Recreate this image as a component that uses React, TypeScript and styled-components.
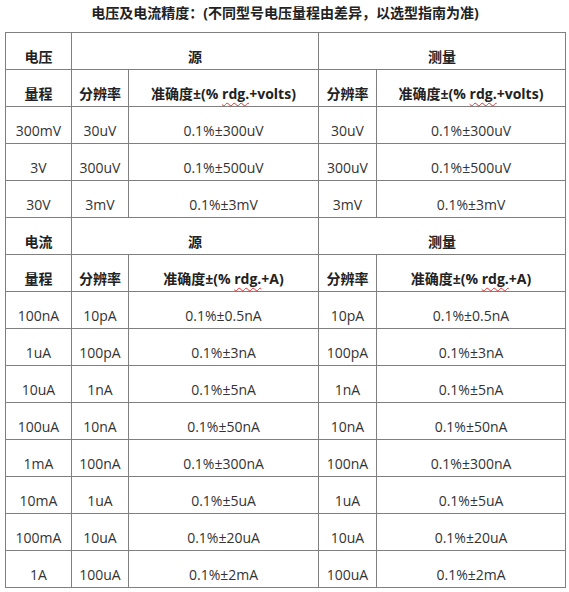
import React from 'react';
import styled, { createGlobalStyle } from 'styled-components';

const GlobalStyle = createGlobalStyle`
  html, body {
    margin: 0;
    padding: 0;
    background: #ffffff;
  }
  body {
    font-family: 'Open Sans', 'Noto Sans CJK SC', sans-serif;
    color: #333333;
  }
`;

const Page = styled.div`
  width: 569px;
  padding: 0 4px 0 5px;
  box-sizing: border-box;
`;

const Title = styled.h4`
  margin: 0;
  height: 32px;
  line-height: 26px;
  text-align: center;
  font-size: 14px;
  font-weight: 700;
  color: #222;
`;

const Table = styled.table`
  width: 560px;
  border-collapse: collapse;
  table-layout: fixed;
  font-size: 14px;
`;

const Cell = styled.td<{ $bold?: boolean }>`
  height: 26px;
  padding: 10px 2px 0;
  border: 1px solid #7f7f7f;
  text-align: center;
  vertical-align: middle;
  white-space: nowrap;
  font-weight: ${(p) => (p.$bold ? 700 : 400)};
  color: ${(p) => (p.$bold ? '#222' : '#333')};
`;

const Misspelt = styled.span`
  text-decoration: underline wavy #e03030;
  text-decoration-thickness: 1px;
  text-underline-offset: 3px;
`;

type Row = [string, string, string, string, string];

const voltageRows: Row[] = [
  ['300mV', '30uV', '0.1%±300uV', '30uV', '0.1%±300uV'],
  ['3V', '300uV', '0.1%±500uV', '300uV', '0.1%±500uV'],
  ['30V', '3mV', '0.1%±3mV', '3mV', '0.1%±3mV'],
];

const currentRows: Row[] = [
  ['100nA', '10pA', '0.1%±0.5nA', '10pA', '0.1%±0.5nA'],
  ['1uA', '100pA', '0.1%±3nA', '100pA', '0.1%±3nA'],
  ['10uA', '1nA', '0.1%±5nA', '1nA', '0.1%±5nA'],
  ['100uA', '10nA', '0.1%±50nA', '10nA', '0.1%±50nA'],
  ['1mA', '100nA', '0.1%±300nA', '100nA', '0.1%±300nA'],
  ['10mA', '1uA', '0.1%±5uA', '1uA', '0.1%±5uA'],
  ['100mA', '10uA', '0.1%±20uA', '10uA', '0.1%±20uA'],
  ['1A', '100uA', '0.1%±2mA', '100uA', '0.1%±2mA'],
];

const Accuracy = ({ unit }: { unit: string }) => (
  <>
    准确度±(% <Misspelt>rdg.</Misspelt>+{unit})
  </>
);

// group header: quantity name over 源 / 测量
const GroupHeader = ({ name, unit }: { name: string; unit: string }) => (
  <>
    <tr>
      <Cell $bold>{name}</Cell>
      <Cell $bold colSpan={2}>源</Cell>
      <Cell $bold colSpan={2}>测量</Cell>
    </tr>
    <tr>
      <Cell $bold>量程</Cell>
      <Cell $bold>分辨率</Cell>
      <Cell $bold><Accuracy unit={unit} /></Cell>
      <Cell $bold>分辨率</Cell>
      <Cell $bold><Accuracy unit={unit} /></Cell>
    </tr>
  </>
);

const DataRows = ({ rows }: { rows: Row[] }) => (
  <>
    {rows.map((r) => (
      <tr key={r[0]}>
        {r.map((v, i) => (
          <Cell key={i}>{v}</Cell>
        ))}
      </tr>
    ))}
  </>
);

const App = () => (
  <Page>
    <GlobalStyle />
    <Title>电压及电流精度：(不同型号电压量程由差异，以选型指南为准)</Title>
    <Table>
      <colgroup>
        <col style={{ width: 66 }} />
        <col style={{ width: 57 }} />
        <col style={{ width: 190 }} />
        <col style={{ width: 58 }} />
        <col style={{ width: 189 }} />
      </colgroup>
      <tbody>
        <GroupHeader name="电压" unit="volts" />
        <DataRows rows={voltageRows} />
        <GroupHeader name="电流" unit="A" />
        <DataRows rows={currentRows} />
      </tbody>
    </Table>
  </Page>
);

export default App;
